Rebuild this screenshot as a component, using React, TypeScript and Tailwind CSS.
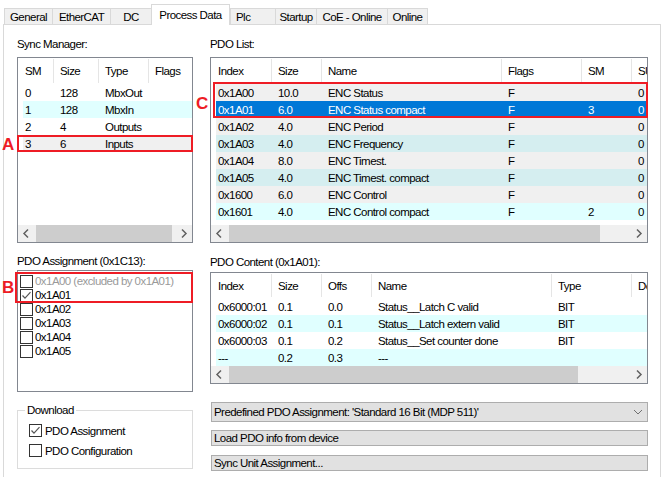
import React from 'react';

type Col = { label: string; w: string };
type Row = { cells: string[]; bg?: string; selected?: boolean };

const TABS = [
  { label: 'General', w: 'w-[48px]' },
  { label: 'EtherCAT', w: 'w-[58px]' },
  { label: 'DC', w: 'w-[41px]' },
  { label: 'Process Data', w: 'w-[79px]', active: true },
  { label: 'Plc', w: 'w-[45px]', left: true },
  { label: 'Startup', w: 'w-[41px]' },
  { label: 'CoE - Online', w: 'w-[71px]' },
  { label: 'Online', w: 'w-[41px]', last: true },
];

const GRAY = 'bg-[#f0f0f0]';
const CYAN = 'bg-[#e0ffff]';
const TEAL = 'bg-[#d5eef0]';

const SM_COLS: Col[] = [
  { label: 'SM', w: 'w-[35px]' },
  { label: 'Size', w: 'w-[45px]' },
  { label: 'Type', w: 'w-[50px]' },
  { label: 'Flags', w: 'w-[50px]' },
];
const SM_ROWS: Row[] = [
  { cells: ['0', '128', 'MbxOut', ''] },
  { cells: ['1', '128', 'MbxIn', ''], bg: CYAN },
  { cells: ['2', '4', 'Outputs', ''] },
  { cells: ['3', '6', 'Inputs', ''], bg: GRAY },
];

const PDO_COLS: Col[] = [
  { label: 'Index', w: 'w-[60px]' },
  { label: 'Size', w: 'w-[50px]' },
  { label: 'Name', w: 'w-[180px]' },
  { label: 'Flags', w: 'w-[80px]' },
  { label: 'SM', w: 'w-[50px]' },
  { label: 'SU', w: 'w-[50px]' },
];
const PDO_ROWS: Row[] = [
  { cells: ['0x1A00', '10.0', 'ENC Status', 'F', '', '0'], bg: GRAY },
  { cells: ['0x1A01', '6.0', 'ENC Status compact', 'F', '3', '0'], selected: true },
  { cells: ['0x1A02', '4.0', 'ENC Period', 'F', '', '0'], bg: GRAY },
  { cells: ['0x1A03', '4.0', 'ENC Frequency', 'F', '', '0'], bg: TEAL },
  { cells: ['0x1A04', '8.0', 'ENC Timest.', 'F', '', '0'], bg: GRAY },
  { cells: ['0x1A05', '4.0', 'ENC Timest. compact', 'F', '', '0'], bg: TEAL },
  { cells: ['0x1600', '6.0', 'ENC Control', 'F', '', '0'], bg: GRAY },
  { cells: ['0x1601', '4.0', 'ENC Control compact', 'F', '2', '0'], bg: CYAN },
];

const CONTENT_COLS: Col[] = [
  { label: 'Index', w: 'w-[60px]' },
  { label: 'Size', w: 'w-[50px]' },
  { label: 'Offs', w: 'w-[50px]' },
  { label: 'Name', w: 'w-[180px]' },
  { label: 'Type', w: 'w-[80px]' },
  { label: 'Default (hex)', w: 'w-[80px]' },
];
const CONTENT_ROWS: Row[] = [
  { cells: ['0x6000:01', '0.1', '0.0', 'Status__Latch C valid', 'BIT', ''] },
  { cells: ['0x6000:02', '0.1', '0.1', 'Status__Latch extern valid', 'BIT', ''], bg: CYAN },
  { cells: ['0x6000:03', '0.1', '0.2', 'Status__Set counter done', 'BIT', ''] },
  { cells: ['---', '0.2', '0.3', '---', '', ''], bg: CYAN },
];

const ASSIGN = [
  { label: '0x1A00 (excluded by 0x1A01)', disabled: true },
  { label: '0x1A01', checked: true },
  { label: '0x1A02' },
  { label: '0x1A03' },
  { label: '0x1A04' },
  { label: '0x1A05' },
];

function Chevron({ dir }: { dir: 'left' | 'right' }) {
  return (
    <svg width="17" height="17" viewBox="0 0 17 17">
      <path
        d={dir === 'left' ? 'M10 4.5 L6 8.5 L10 12.5' : 'M7 4.5 L11 8.5 L7 12.5'}
        fill="none"
        stroke="#606060"
        strokeWidth="1.5"
      />
    </svg>
  );
}

function HScroll({ thumb }: { thumb: string }) {
  return (
    <div className="flex h-[17px] shrink-0 bg-[#f0f0f0]">
      <Chevron dir="left" />
      <div className="flex-1 pl-[1px]">
        <div className={`h-full bg-[#cdcdcd] ${thumb}`} />
      </div>
      <Chevron dir="right" />
    </div>
  );
}

function ListView({ cols, rows, className, headerH, thumb }: { cols: Col[]; rows: Row[]; className: string; headerH: string; thumb: string }) {
  return (
    <div className={`flex flex-col overflow-hidden border border-[#828790] bg-white ${className}`}>
      <div className={`flex shrink-0 pl-[5px] ${headerH}`}>
        {cols.map((c, i) => (
          <div key={c.label} className={`relative flex shrink-0 items-center pl-[2px] whitespace-nowrap ${c.w}`}>
            {c.label}
            {i < cols.length - 1 && <span className="absolute top-[1px] right-[4px] bottom-[1px] w-px bg-[#e5e5e5]" />}
          </div>
        ))}
      </div>
      <div className="flex-1 pl-[5px]">
        {rows.map((r, i) => (
          <div
            key={i}
            className={`flex h-[17px] items-center ${r.selected ? 'bg-[#0078d7] text-white' : r.bg ?? ''}`}
          >
            {r.cells.map((cell, j) => (
              <div key={j} className={`shrink-0 pl-[2px] whitespace-nowrap ${cols[j].w}`}>
                {cell}
              </div>
            ))}
          </div>
        ))}
      </div>
      <HScroll thumb={thumb} />
    </div>
  );
}

function Check({ checked }: { checked?: boolean }) {
  return (
    <span className="flex h-[13px] w-[13px] shrink-0 items-center justify-center border border-[#333333] bg-white">
      {checked && (
        <svg width="11" height="11" viewBox="0 0 11 11">
          <path d="M1.5 5.5 L4 8.2 L9.5 2.2" fill="none" stroke="#555555" strokeWidth="1.2" />
        </svg>
      )}
    </span>
  );
}

export default function App() {
  return (
    <div className="relative h-[477px] w-[663px] overflow-hidden bg-white font-['Liberation_Sans',Arial,sans-serif] text-[11.5px] leading-[14px] tracking-[-0.55px] text-black">
      {/* tab strip */}
      <div className="flex h-[24px] items-end pl-[4px]">
        {TABS.map((t) =>
          t.active ? (
            <div
              key={t.label}
              className={`relative z-10 mb-[-1px] flex h-[21px] items-center justify-center border border-b-0 border-[#d9d9d9] bg-white ${t.w}`}
            >
              {t.label}
            </div>
          ) : (
            <div
              key={t.label}
              className={`flex h-[16px] items-center border-t border-l border-[#d9d9d9] bg-[#f0f0f0] ${t.left ? 'pl-[5px]' : 'justify-center'} ${t.last ? 'border-r' : ''} ${t.w}`}
            >
              {t.label}
            </div>
          )
        )}
      </div>

      {/* panel */}
      <div className="ml-[3px] flex h-[460px] w-[658px] gap-[17px] border border-[#d9d9d9] pt-[12px] pl-[13px]">
        {/* left column */}
        <div className="flex w-[176px] flex-col">
          <div className="h-[14px]">Sync Manager:</div>
          <ListView cols={SM_COLS} rows={SM_ROWS} className="mt-[6px] h-[186px]" headerH="h-[26px]" thumb="w-[136px]" />

          <div className="mt-[11px] h-[14px]">PDO Assignment (0x1C13):</div>
          <div className="mt-[2px] h-[122px] border border-[#828790] bg-white pt-[3px] pl-[2px]">
            {ASSIGN.map((a) => (
              <div key={a.label} className="flex h-[14px] items-center gap-[2px]">
                <Check checked={a.checked} />
                <span className={a.disabled ? 'text-[#9a9a9a]' : ''}>{a.label}</span>
              </div>
            ))}
          </div>

          <fieldset className="mt-[11px] h-[66px] border border-[#dcdcdc] pl-[6px]">
            <legend className="ml-[1px] px-[2px] leading-[14px]">Download</legend>
            <div className="mt-[7px] ml-[5px] flex h-[13px] items-center gap-[3px]">
              <Check checked />
              <span>PDO Assignment</span>
            </div>
            <div className="mt-[7px] ml-[5px] flex h-[13px] items-center gap-[3px]">
              <Check />
              <span>PDO Configuration</span>
            </div>
          </fieldset>
        </div>

        {/* right column */}
        <div className="flex w-[438px] flex-col">
          <div className="h-[14px]">PDO List:</div>
          <ListView cols={PDO_COLS} rows={PDO_ROWS} className="mt-[6px] h-[186px]" headerH="h-[26px]" thumb="w-[371px]" />

          <div className="mt-[12px] h-[14px]">PDO Content (0x1A01):</div>
          <ListView cols={CONTENT_COLS} rows={CONTENT_ROWS} className="mt-[3px] h-[112px]" headerH="h-[25px]" thumb="w-[349px]" />

          <div className="mt-[18px] ml-[1px] flex h-[20px] w-[437px] items-center justify-between border border-[#adadad] bg-[#e1e1e1] pr-[4px] pl-[2px]">
            <span>Predefined PDO Assignment: 'Standard 16 Bit (MDP 511)'</span>
            <svg width="10" height="6" viewBox="0 0 10 6">
              <path d="M1 1 L5 5 L9 1" fill="none" stroke="#707070" strokeWidth="1" />
            </svg>
          </div>
          <div className="mt-[8px] ml-[1px] flex h-[16px] w-[437px] items-center border border-[#adadad] bg-[#e1e1e1] pl-[2px]">
            Load PDO info from device
          </div>
          <div className="mt-[9px] ml-[1px] flex h-[16px] w-[437px] items-center border border-[#adadad] bg-[#e1e1e1] pl-[2px]">
            Sync Unit Assignment...
          </div>
        </div>
      </div>

      {/* annotations */}
      <div className="absolute top-[135px] left-[17px] h-[17px] w-[176px] border-2 border-[#ee1c25]" />
      <div className="absolute top-[82px] left-[213px] h-[36px] w-[435px] border-2 border-[#ee1c25]" />
      <div className="absolute top-[272px] left-[15px] h-[31px] w-[178px] border-2 border-[#ee1c25]" />
      <span className="absolute top-[136px] left-[2px] text-[17px] leading-[17px] font-bold tracking-normal text-[#ee1c25]">A</span>
      <span className="absolute top-[279px] left-[2px] text-[17px] leading-[17px] font-bold tracking-normal text-[#ee1c25]">B</span>
      <span className="absolute top-[95px] left-[196px] text-[17px] leading-[17px] font-bold tracking-normal text-[#ee1c25]">C</span>
    </div>
  );
}
